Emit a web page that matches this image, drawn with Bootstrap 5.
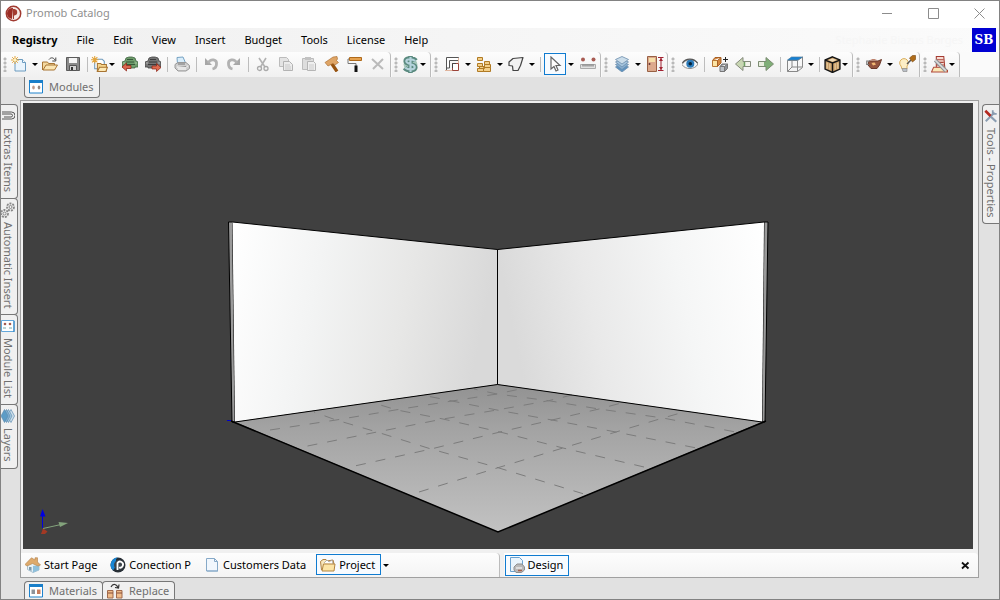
<!DOCTYPE html>
<html lang="en">
<head>
<meta charset="utf-8">
<meta name="viewport" content="width=device-width, initial-scale=1">
<title>Promob Catalog</title>
<link href="https://cdn.jsdelivr.net/npm/bootstrap@5.3.0/dist/css/bootstrap.min.css" rel="stylesheet">
<style>
:root{--edge:#828282;--tabline:#777;--ink:#6f6f6f;--blue:#0f7bd0}
body{font-family:"Noto Sans","Open Sans",sans-serif;font-size:11px;line-height:16px;color:#000;background:#e1e1e1;border:1px solid var(--edge);overflow:hidden}
button{font:inherit;color:inherit;background:none;border:0;padding:0}
svg{display:block;flex:none}
.titlebar{height:27px;background:#fff;color:#8f8f8f;padding:0 0 3px 4px}
.winbtns{margin-right:-3px}
.winbtn{width:46px;height:24px;color:#8c8c8c}
.menubar{height:24px;background:linear-gradient(90deg,#f0f0f0,#fbfbfb);padding:0 3px 0 1px}
.menubar a{color:#000;text-decoration:none;padding:4px 9px 4px 10px}
.user-name{color:#f6f6f6;padding-right:9px}
.user-badge{width:24px;height:24px;background:#0000d2;color:#fff;font:bold 12px/24px "DejaVu Serif",serif}
.toolbars{height:25px;background:#fafafa}
.strip{background:linear-gradient(#fdfdfd,#f0f0f0);border-right:1px solid #bcbcbc;border-radius:4px 4px 0 0;padding:0 1px 1px 0;margin-right:1px}
.strip:first-child .rule{width:6px}
.grip{width:9px;height:15px;background:radial-gradient(circle at 4px 2px,#b9b9b9 1px,transparent 2px) 0 0/9px 4px}
.tool{width:23px;height:22px;display:flex;align-items:center;justify-content:center;flex:none}
.tool-split{width:22px}
.arrow-split{width:10px;height:22px;flex:none;display:flex;align-items:center;justify-content:center}
.tool-drop{width:28px;padding-left:1px;justify-content:flex-start;gap:1px}
.tri{width:0;height:0;border:3px solid transparent;border-top-color:#000;border-bottom:0;flex:none}
.rule{width:7px;height:15px;flex:none;background:linear-gradient(#bdbdbd,#bdbdbd) center/1px 100% no-repeat}
.picked{border:1px solid var(--blue);background:#f7fbff}
.siderail{width:19px;padding-top:27px}
.siderail-right{width:20px;align-items:flex-end}
.side-tab{writing-mode:vertical-rl;display:flex;align-items:flex-end;gap:4px;width:17px;background:#f0f0f0;color:var(--ink);border:1px solid var(--tabline);border-left:0;border-radius:0 4px 4px 0;padding:3px 0 6px;margin-bottom:-1px;white-space:nowrap;line-height:14px}
.side-tab-right{align-items:center;border-left:1px solid var(--tabline);border-right:0;border-radius:4px 0 0 4px}
.flat-tab{display:flex;align-items:center;gap:6px;background:#f0f0f0;color:var(--ink);border:1px solid var(--tabline);padding:0 5px 0 4px}
.tab-top{border-top:0;border-radius:0 0 4px 4px;height:21px}
.tab-bottom{border-bottom:0;border-radius:4px 4px 0 0;height:18px;margin-right:-1px}
.toprow{height:23px;padding-left:4px}
.bottomrow{height:21px;padding:3px 0 0 4px}
.frame{border:1px solid #a0a0a0;background:#f0f0f0;padding:2px 5px 0 2px}
.scene{background:#404040;min-height:0}
.scene svg.room{width:100%;height:100%;position:absolute;inset:0}
.axes{position:absolute;left:16px;bottom:10px}
.docbar{height:28px;padding-top:4px;margin:0 -5px 0 -2px}
.docstrip{background:linear-gradient(#fdfdfd,#f4f4f4);border-radius:0 4px 0 0;padding-left:1px}
.doc-left{flex:0 0 50%;border-right:1px solid #bcbcbc;gap:7px}
.docbtn{display:flex;align-items:center;gap:3px;height:21px;padding:0 3px;white-space:nowrap}
.docbtn.picked{padding:0 5px 0 3px}
</style>
</head>
<body class="d-flex flex-column vh-100">
<svg width="0" height="0" class="position-absolute" aria-hidden="true">
<defs>
<linearGradient id="gL" x1="0" x2="1" y1="0" y2=".15"><stop offset="0" stop-color="#fff"/><stop offset=".35" stop-color="#f3f4f4"/><stop offset=".7" stop-color="#e7e7e6"/><stop offset="1" stop-color="#d9d9d9"/></linearGradient>
<linearGradient id="gR" x1="1" x2="0" y1="0" y2=".15"><stop offset="0" stop-color="#fff"/><stop offset=".35" stop-color="#f5f6f6"/><stop offset=".7" stop-color="#e9e9e9"/><stop offset="1" stop-color="#dadada"/></linearGradient>
<linearGradient id="gF" x1="0" x2="0" y1="0" y2="1"><stop offset="0" stop-color="#929292"/><stop offset=".3" stop-color="#a3a3a3"/><stop offset="1" stop-color="#c2c2c2"/></linearGradient>
<symbol id="new" viewBox="0 0 16 16"><path d="M4 3.500h7.500l3 3V15H4z" fill="#eaf4fc" stroke="#6c9cc0"/><path d="M11.500 3.500v3h3" fill="#fff" stroke="#6c9cc0"/><path d="M4 0v8M0 4h8M1.200 1.200l5.600 5.600M6.800 1.200L1.200 6.800" stroke="#e3a43a"/><circle cx="4" cy="4" r="1.500" fill="#fff3c0"/></symbol>
<symbol id="open" viewBox="0 0 16 16"><path d="M.5 14V6h5l1 1.500h6V10" fill="#f4d9a0" stroke="#a87432"/><path d="M1 14l3-5h11.500l-3 5z" fill="#fbe6b4" stroke="#a87432"/><path d="M7 3.500C9 1 11.500 1.500 13 4M13.800 1.500V5h-3.500" fill="none" stroke="#444"/></symbol>
<symbol id="save" viewBox="0 0 16 16"><path d="M1.500 1.500h13v13h-13z" fill="#8b8b8b" stroke="#5b5b5b"/><path d="M4 2h8v5H4z" fill="#f5f5f5"/><path d="M4.500 9.500h7v5h-7z" fill="#d5d5d5" stroke="#555"/><path d="M6 11h2v3H6z" fill="#333"/></symbol>
<symbol id="newf" viewBox="0 0 16 16"><path d="M3.500 3h7l2 2v7h-9z" fill="#fff" stroke="#6d99bb"/><path d="M6 14V7h3l1 1h4.500v6z" fill="#f6d68e" stroke="#a87432"/><path d="M6 14.500l2-4h7.500l-1.500 4z" fill="#fde9b5" stroke="#a87432"/><path d="M3.500 0v7M0 3.500h7M1 1l5 5M6 1L1 6" stroke="#e3a43a"/></symbol>
<symbol id="imp" viewBox="0 0 16 16"><path d="M3 5l1-3 3-1h3l3 1 1 3 2 1v5h-3v1H3v-1H0V6z" fill="#6f9d6c" stroke="#3f6340" stroke-width=".8"/><path d="M5 3.500h6M4 6h8M3 8.500h10" stroke="#36593a"/><path d="M1 7h2M13 7h2" stroke="#a9c9a2"/><path d="M0 11l4.500-4v2.500H9v3H4.500V15z" fill="#d9664f" stroke="#8b2013" stroke-width=".7"/></symbol>
<symbol id="exp" viewBox="0 0 16 16"><path d="M3 5l1-3 3-1h3l3 1 1 3 2 1v5h-3v1H3v-1H0V6z" fill="#757575" stroke="#444" stroke-width=".8"/><path d="M5 3.500h6M4 6h8M3 8.500h10" stroke="#3b3b3b"/><path d="M1 7h2M13 7h2" stroke="#b5b5b5"/><path d="M16 11.500L11.500 7.500V10H7v3h4.500v2.500z" fill="#df6b50" stroke="#8b2013" stroke-width=".7"/></symbol>
<symbol id="print" viewBox="0 0 16 16"><path d="M3.500 8L3 1.500l6-.5L12 8z" fill="#d9edfa" stroke="#76a3c4"/><path d="M1 8.500l3-2h8l3.500 3v3L12 15H4l-3-3z" fill="#cfcfcf" stroke="#999"/><path d="M3 11h9l2-1M4 13h8" stroke="#fff"/><path d="M4 8h7" stroke="#777"/></symbol>
<symbol id="undo" viewBox="0 0 16 16"><path d="M2 2v7h7z" fill="#a7a7a7"/><path d="M5 7C8 2 14 3.500 13.500 8c0 3-2 4.500-4 5" fill="none" stroke="#b2b2b2" stroke-width="2.800"/></symbol>
<symbol id="cut" viewBox="0 0 16 16"><path d="M4 2l6 9M11 2L5.500 11" stroke="#b2b2b2" stroke-width="1.600"/><circle cx="4.500" cy="12.500" r="2" fill="none" stroke="#aaa" stroke-width="1.300"/><circle cx="11" cy="12.500" r="2" fill="none" stroke="#aaa" stroke-width="1.300"/></symbol>
<symbol id="copy" viewBox="0 0 16 16"><path d="M1.500 1.500h7l2 2v7h-9z" fill="#e4e4e4" stroke="#bcbcbc"/><path d="M5.500 5.500h6l3 3v6h-9z" fill="#ececec" stroke="#b3b3b3"/><path d="M7 9h5M7 11h6M7 13h6" stroke="#c9c9c9"/></symbol>
<symbol id="paste" viewBox="0 0 16 16"><path d="M1.500 2.500h11v11h-11z" fill="#ddd" stroke="#bcbcbc"/><path d="M4 1h6v3H4z" fill="#c2c2c2"/><path d="M6.500 5.500h6l2 2v7h-8z" fill="#efefef" stroke="#b5b5b5"/><path d="M8 9h5M8 11h5M8 13h5" stroke="#ccc"/></symbol>
<symbol id="hammer" viewBox="0 0 16 16"><path d="M7 6.500l6 9" stroke="#96520f" stroke-width="3.200"/><path d="M1 6.500L9 1l4-.5.500 2.500-1 1.500 2 2L11 9 9 7.500 4 10z" fill="#dfa566" stroke="#a5662a" stroke-width=".6"/></symbol>
<symbol id="roller" viewBox="0 0 16 16"><path d="M2.500 1.500h12v3h-12z" fill="#e5a14e" stroke="#af6a1b"/><path d="M2 3H1v4.500h8V10" fill="none" stroke="#777"/><path d="M7.500 9.500h3V16h-3z" fill="#111"/></symbol>
<symbol id="del" viewBox="0 0 16 16"><path d="M2 3l11 10M13 3L3 13" stroke="#bababa" stroke-width="2"/></symbol>
<symbol id="dollar" viewBox="0 0 16 16"><ellipse cx="8" cy="8" rx="6.500" ry="6" fill="#a8c9bd"/><path d="M13 4.500C11 2 3.500 1.500 3.500 5c0 3.500 9 2 9 5.500 0 3.500-7.500 3.500-10 .5M8 0v16" fill="none" stroke="#5a8a7f" stroke-width="4.400"/><path d="M12.500 4.700C10 2.500 4 2.300 4 5c0 3 8 2 8 5.300 0 3-6 3-9 .7M8 1v14" fill="none" stroke="#b5d3dc" stroke-width="2"/></symbol>
<symbol id="plan" viewBox="0 0 16 16"><path d="M2.500 15V1.500h12V4.500H5.500V12h-3" fill="#fff" stroke="#555"/><path d="M1 14.500h8M14.500 2v5" stroke="#e0b49d"/><path d="M8.500 7.500h6v7h-6z" fill="#fff" stroke="#9b4339"/><path d="M8.500 12V7.500H12" fill="none" stroke="#444"/></symbol>
<symbol id="brick" viewBox="0 0 16 16"><path d="M1.500 1.500h5v3h-5zM8.500 5.500h5v3h-5zM1.500 7.500h5v3h-5zM3.500 10.500h5v2h-5zM8.500 8.500h6v3h-6zM1.500 12.500h6v3h-6zM7.500 11.500h7v4h-7z" fill="#f3cf88" stroke="#b07a24"/></symbol>
<symbol id="poly" viewBox="0 0 16 16"><path d="M5 2.500l10-1L12.500 9.500l-2.500 5H5L4.500 10 1 9.500V6z" fill="#f2f2f2" stroke="#444" stroke-width="1.200" stroke-linejoin="round"/></symbol>
<symbol id="cursor" viewBox="0 0 16 16"><path d="M4 1v12l3-2.500 2 4.500 2-1-2-4.500h4z" fill="#fff" stroke="#666" stroke-width="1.200"/></symbol>
<symbol id="ruler" viewBox="0 0 16 16"><path d="M.5 8.500h15v4H.5z" fill="#e1e1e1" stroke="#aaa"/><path d="M3 8.500v2M5 8.500v2M7 8.500v2M9 8.500v2M11 8.500v2M13 8.500v2" stroke="#666"/><circle cx="3" cy="3.500" r="2" fill="#a85b52"/><circle cx="13.500" cy="3.500" r="2" fill="#a85b52"/></symbol>
<symbol id="layers" viewBox="0 0 16 16"><g stroke="#6c8ead" stroke-width=".8"><path d="M8 7.500l6.500 3.500L8 16l-6.500-5z" fill="#5d92c0"/><path d="M8 5.500l6.500 3L8 13.500 1.500 8.500z" fill="#86aed0"/><path d="M8 3l6.500 3L8 11 1.500 6z" fill="#a5c4dd"/><path d="M8 .5l6.500 3L8 8 1.500 3.500z" fill="#cbddea"/></g></symbol>
<symbol id="door" viewBox="0 0 18 16"><path d="M1.500.5h9v15h-9z" fill="#dca98c" stroke="#986044"/><path d="M3 2h6v4H3z" fill="#f6dfa8"/><circle cx="3.500" cy="8" r="1" fill="#633"/><path d="M15 2v12M12 1.500h5.500M12 14.500h5.500" stroke="#a12332"/><path d="M13 5L15 2l2 3zM13 11l2 3 2-3z" fill="#a12332"/></symbol>
<symbol id="eye" viewBox="0 0 16 16"><path d="M0 8.500C3 2.500 13 2.500 16 8c-3 6-13 6-16 .5z" fill="#f5f7f9" stroke="#909090"/><circle cx="8.300" cy="7.800" r="4" fill="#2a7ab9"/><circle cx="8.300" cy="7.800" r="1.800" fill="#06233b"/><path d="M.5 7C4 1.500 12 2 15.500 7" fill="none" stroke="#555" stroke-width="1.300"/></symbol>
<symbol id="boxes" viewBox="0 0 16 16"><path d="M.5 4.500h5v6h-5z" fill="#fce4a4" stroke="#b77835"/><path d="M.5 4.500L3 1.500h6L5.500 4.500v6L9 7V1.500" fill="#d4873f" stroke="#a76025"/><path d="M8 10.500h4.500v5H8z" fill="#bdc2c8" stroke="#777"/><path d="M8 10.500L10 8h5.500l-3 2.500v5l3-3V8" fill="#8d9298" stroke="#777"/><path d="M13.500 1v5M11 3.500h5" stroke="#222"/></symbol>
<symbol id="arr" viewBox="0 0 16 16"><path d="M.5 5.500H8V1.500L15.500 8 8 14.500v-4H.5z" fill="#7fae77" stroke="#7c8c72"/><path d="M1 6h5v4H1z" fill="#e9eedf"/></symbol>
<symbol id="arl" viewBox="0 0 16 16"><path d="M15.500 5.500H8V1.500L.5 8 8 14.500v-4h7.500z" fill="#c8d6b2" stroke="#858b7c"/><path d="M10 6h5v4h-5z" fill="#f4f4ec"/><path d="M9.500 6v4" stroke="#6e9e61" stroke-width="1.500"/></symbol>
<symbol id="wire" viewBox="0 0 18 16"><path d="M1.500 4.500h10v11h-10zM11.500 4.500L16.500 1v10.500l-5 4M1.500 15.500l4.500-4.500h10M6 11V4.500" fill="none" stroke="#888"/><path d="M1.500 4L5.500 1h11L12 4z" fill="#1481d6" stroke="#4e7c9f" stroke-width=".7"/></symbol>
<symbol id="crate" viewBox="0 0 16 16"><path d="M8 .8l7 3v8.500L8 15.500 1 12.300V3.800z" fill="#c69c67" stroke="#151515" stroke-width="1.300"/><path d="M1 3.800l7 2.800 7-2.800M8 6.600v9" fill="none" stroke="#151515" stroke-width="1.300"/><path d="M3 6v6M5.500 7v6M10.500 7v6M13 6v6" stroke="#ecd0a3"/><path d="M4 3.800l4-1.500 4 1.500-4 1.500z" fill="#f0dab6"/></symbol>
<symbol id="teapot" viewBox="0 0 16 16"><path d="M3 5h9l3.500-1.500L13.500 9 11 12.500H5L2 9z" fill="#94553f" stroke="#693829"/><path d="M3 8.500H.8V5H4" fill="none" stroke="#777" stroke-width="1.200"/><path d="M4 4.500C5 2.500 10 2.500 11 4.500z" fill="#bd826c"/><path d="M5.500 7l3-.5 1.500 2-3 1z" fill="#f3ba74"/></symbol>
<symbol id="bulb" viewBox="0 0 18 18"><path d="M3 11a4.300 4.300 0 1 1 6 0v3H4z" fill="#fdeec5" stroke="#d9ae5d"/><path d="M4 13.500h5v3H5z" fill="#b9bfc7" stroke="#858585" stroke-width=".6"/><path d="M9 9l4-4" stroke="#555" stroke-width="1.500"/><path d="M11.500 3l3-2.500h3v4l-3 2.500z" fill="#b06d1a" stroke="#77470f" stroke-width=".6"/></symbol>
<symbol id="tower" viewBox="0 0 16 16"><path d="M5 .5h7l1 10.500H5z" fill="#f7dcd3" stroke="#a53b32"/><path d="M5 3.500h7M5 6h7M5 8.500h8" stroke="#aa453b"/><path d="M.5 15l2-4.500h7l6 3V15z" fill="#fae8b7" stroke="#b0493b"/><path d="M4 4l10 10" stroke="#8d9296" stroke-width="3.500"/><path d="M4 4l10 10" stroke="#ddd" stroke-width="1.500"/></symbol>
<symbol id="mods" viewBox="0 0 14 14"><path d="M.5 1h13v12H.5z" fill="#fff" stroke="#1e83cd"/><path d="M0 0h14v3H0z" fill="#1a7fc9"/><ellipse cx="4.500" cy="7.500" rx="1.300" ry="2" fill="#bd9a8b"/><ellipse cx="10" cy="7.500" rx="1.300" ry="2" fill="#998980"/></symbol>
<symbol id="mats" viewBox="0 0 14 14"><path d="M.5 1h13v12H.5z" fill="#fff" stroke="#1e83cd"/><path d="M0 0h14v3H0z" fill="#1a7fc9"/><path d="M2.500 5.500H6V10H2.500z" fill="#8f949b"/><path d="M8 5.500h3.500V10H8z" fill="#c87d5d"/></symbol>
<symbol id="swap" viewBox="0 0 16 16"><path d="M.5 7.500h5.500v7.500H.5zM9.500 7.500H15v7.500H9.500z" fill="#f0bc8a" stroke="#a16a4c"/><path d="M1 10h5M10 10h5" stroke="#874f3b"/><path d="M4 4C6 0 10 1 11 5M8 4.500l3.500.5.500-3.500" fill="none" stroke="#333" stroke-width="1.200"/></symbol>
<symbol id="home" viewBox="0 0 16 16"><path d="M2.500 7L7 3l7 4v6l-6 2.500-5.500-3z" fill="#e5f1f8" stroke="#88a9bd" stroke-width=".7"/><path d="M8 9v6.500l6-2.500V8z" fill="#8fc0dc"/><path d="M0 7.500L6.500.8 10 3V.8h2.500V5L15.500 8 13 9 7.500 6.500 2 9z" fill="#deaa6c" stroke="#b98a55" stroke-width=".7"/><path d="M4 10h2.500v4L4 12.700z" fill="#7d98a8"/></symbol>
<symbol id="conn" viewBox="0 0 16 16"><circle cx="8" cy="8" r="7.500" fill="#282f36"/><path d="M8 .5a7.500 7.500 0 0 0-5 13L6 9V2z" fill="#1785d4"/><circle cx="9" cy="8" r="5" fill="#3d454c"/><path d="M7.500 13V6a3 3 0 1 1 1.500 4.500" fill="none" stroke="#fff" stroke-width="1.800"/></symbol>
<symbol id="page" viewBox="0 0 14 16"><path d="M1.500 1.500h8l3 3v9.500h-11z" fill="#f1f7fd" stroke="#86a9c8"/><path d="M9.500 1.500v3h3M2 14h11" fill="none" stroke="#86a9c8"/></symbol>
<symbol id="proj" viewBox="0 0 16 16"><path d="M1.500 13L.5 4.500 3 2.500h3l1 1.500 6-1 1 4" fill="#f8e8be" stroke="#ae8040"/><path d="M4 6l3-3 2 2 3-2 1 4" fill="#fff" stroke="#999" stroke-width=".7"/><path d="M2 14L3.500 7h11.500l-1 7z" fill="#fce5a6" stroke="#b18441"/></symbol>
<symbol id="design" viewBox="0 0 16 16"><path d="M1.500.5h9l3 3v11h-12z" fill="#e9f4fc" stroke="#6ba1cd"/><path d="M5 10l3-3h5l2.500 3v3l-3 2.500H7L5 13z" fill="#b9b9b9" stroke="#8f8f8f"/><path d="M7 11h6" stroke="#fff"/><path d="M9 13.500h4" stroke="#a8604a" stroke-width="1.500"/></symbol>
<symbol id="clip" viewBox="0 0 14 14"><path d="M3 3h7.500a3.500 3.500 0 0 1 0 7H1M1 5h9a1.500 1.500 0 0 1 0 3H3M1 3h2" fill="none" stroke="#555"/></symbol>
<symbol id="gears" viewBox="0 0 14 16"><g fill="none" stroke="#888"><circle cx="9.500" cy="5" r="3.500" stroke-dasharray="2 1" stroke-width="1.800"/><circle cx="9.500" cy="5" r="1.500"/><circle cx="3.500" cy="11.500" r="3.500" stroke-dasharray="2 1" stroke-width="1.800"/><circle cx="3.500" cy="11.500" r="1.500"/></g></symbol>
<symbol id="mlist" viewBox="0 0 14 14"><path d="M.5 1.500h12.500v11H.5z" fill="#fff" stroke="#64a7da"/><path d="M13 2v11" stroke="#1c78bf"/><circle cx="4" cy="5" r="1.300" fill="#a35c51"/><circle cx="9" cy="5" r="1.300" fill="#a35c51"/><path d="M2 9h3M8 9h3" stroke="#7aa"/></symbol>
<symbol id="vlayers" viewBox="0 0 14 14"><g stroke="#5f8cb0" stroke-width=".7"><path d="M10 .5L13.500 7 10 13.500 6 7z" fill="#cfe1ec"/><path d="M7.500.5L11 7l-3.500 6.500L3.500 7z" fill="#a7cbe1"/><path d="M5.500.5L9 7l-3.500 6.500L1.500 7z" fill="#80b1d3"/><path d="M3.500.5L7 7l-3.500 6.500L0 7z" fill="#5c9cc6"/></g></symbol>
<symbol id="wrench" viewBox="0 0 16 16"><path d="M2 14L12 4" stroke="#8a9db1" stroke-width="2.200"/><path d="M10 1.500v4h4.500" fill="none" stroke="#8a9db1" stroke-width="2"/><path d="M7 8l7 6.500" stroke="#8a9db1" stroke-width="2.500"/><path d="M1.500 2l6 6" stroke="#b3281f" stroke-width="3"/></symbol>
</defs>
</svg>

<header class="titlebar d-flex align-items-center">
  <svg width="17" height="17" viewBox="0 0 17 17" aria-hidden="true"><circle cx="8.500" cy="8.500" r="7.200" fill="#f7e9e6" stroke="#a13a30" stroke-width="1.500"/><path d="M8 3a5.500 5.500 0 0 0-1 11z" fill="#9b2c24"/><path d="M8 14V4h1.500a3.300 3.300 0 0 1 0 6.500H9V14z" fill="#a33b30"/></svg>
  <span class="ms-1">Promob Catalog</span>
  <div class="winbtns ms-auto d-flex">
    <button class="winbtn" aria-label="Minimize"><svg class="mx-auto" width="11" height="11"><path d="M0 5.500h10" stroke="currentColor"/></svg></button>
    <button class="winbtn" aria-label="Maximize"><svg class="mx-auto" width="11" height="11"><path d="M.5.5h10v10H.5z" fill="none" stroke="currentColor"/></svg></button>
    <button class="winbtn" aria-label="Close"><svg class="mx-auto" width="11" height="11"><path d="M.5.500l10 10M10.500.500l-10 10" stroke="currentColor"/></svg></button>
  </div>
</header>

<nav class="menubar d-flex align-items-center" aria-label="Main menu">
  <a href="#" class="fw-bold">Registry</a><a href="#">File</a><a href="#">Edit</a><a href="#">View</a><a href="#">Insert</a><a href="#">Budget</a><a href="#">Tools</a><a href="#">License</a><a href="#">Help</a>
  <span class="user-name ms-auto">Stephanie Biazus Borges</span>
  <span class="user-badge text-center">SB</span>
</nav>

<div class="toolbars d-flex" role="toolbar" aria-label="Tools">
  <div class="strip d-flex align-items-center">
    <span class="grip"></span>
    <button class="tool tool-drop" aria-label="New"><svg width="16" height="16"><use href="#new"/></svg><span class="tri ms-1"></span></button>
    <button class="tool" aria-label="Open"><svg width="16" height="16"><use href="#open"/></svg></button>
    <button class="tool" aria-label="Save"><svg width="16" height="16"><use href="#save"/></svg></button>
    <span class="rule"></span>
    <button class="tool tool-drop" aria-label="New from folder"><svg width="17" height="17"><use href="#newf"/></svg><span class="tri"></span></button>
    <button class="tool" aria-label="Import"><svg width="16" height="16"><use href="#imp"/></svg></button>
    <button class="tool" aria-label="Export"><svg width="16" height="16"><use href="#exp"/></svg></button>
    <span class="rule"></span>
    <button class="tool" aria-label="Print"><svg width="16" height="16"><use href="#print"/></svg></button>
    <span class="rule"></span>
    <button class="tool" aria-label="Undo"><svg width="16" height="16"><use href="#undo"/></svg></button>
    <button class="tool" aria-label="Redo"><svg width="16" height="16" viewBox="0 0 16 16"><g transform="matrix(-1 0 0 1 16 0)"><use href="#undo"/></g></svg></button>
    <span class="rule"></span>
    <button class="tool" aria-label="Cut"><svg width="16" height="16"><use href="#cut"/></svg></button>
    <button class="tool" aria-label="Copy"><svg width="16" height="16"><use href="#copy"/></svg></button>
    <button class="tool" aria-label="Paste"><svg width="16" height="16"><use href="#paste"/></svg></button>
    <button class="tool" aria-label="Build"><svg width="16" height="16"><use href="#hammer"/></svg></button>
    <button class="tool" aria-label="Paint"><svg width="16" height="16"><use href="#roller"/></svg></button>
    <button class="tool" aria-label="Delete"><svg width="16" height="16"><use href="#del"/></svg></button>
  </div>
  <div class="strip d-flex align-items-center">
    <span class="grip"></span>
    <button class="tool tool-drop" aria-label="Budget"><svg width="17" height="17"><use href="#dollar"/></svg><span class="tri"></span></button>
  </div>
  <div class="strip d-flex align-items-center">
    <span class="grip"></span>
    <button class="tool tool-split" aria-label="Room"><svg width="16" height="16"><use href="#plan"/></svg></button><button class="arrow-split" aria-label="Room options"><span class="tri"></span></button>
    <button class="tool tool-split" aria-label="Wall"><svg width="16" height="16"><use href="#brick"/></svg></button><button class="arrow-split" aria-label="Wall options"><span class="tri"></span></button>
    <button class="tool tool-split" aria-label="Shape"><svg width="16" height="16"><use href="#poly"/></svg></button><button class="arrow-split" aria-label="Shape options"><span class="tri"></span></button>
    <span class="rule"></span>
    <button class="tool tool-split picked" aria-label="Select"><svg width="16" height="16"><use href="#cursor"/></svg></button><button class="arrow-split" aria-label="Select options"><span class="tri"></span></button>
    <button class="tool" aria-label="Measure"><svg width="16" height="16"><use href="#ruler"/></svg></button>
  </div>
  <div class="strip d-flex align-items-center">
    <span class="grip"></span>
    <button class="tool tool-split" aria-label="Layers"><svg width="16" height="16"><use href="#layers"/></svg></button><button class="arrow-split" aria-label="Layers options"><span class="tri"></span></button>
    <button class="tool" aria-label="Height"><svg width="18" height="16"><use href="#door"/></svg></button>
  </div>
  <div class="strip d-flex align-items-center">
    <span class="grip"></span>
    <button class="tool" aria-label="View"><svg width="16" height="16"><use href="#eye"/></svg></button>
    <span class="rule"></span>
    <button class="tool" aria-label="Add view"><svg width="16" height="16"><use href="#boxes"/></svg></button>
    <button class="tool" aria-label="Previous"><svg width="16" height="16"><use href="#arl"/></svg></button>
    <button class="tool" aria-label="Next"><svg width="16" height="16"><use href="#arr"/></svg></button>
    <span class="rule"></span>
    <button class="tool tool-split" aria-label="Projection"><svg width="18" height="16"><use href="#wire"/></svg></button><button class="arrow-split" aria-label="Projection options"><span class="tri"></span></button>
    <span class="rule"></span>
    <button class="tool tool-drop" aria-label="Box"><svg width="17" height="17"><use href="#crate"/></svg><span class="tri"></span></button>
  </div>
  <div class="strip d-flex align-items-center">
    <span class="grip"></span>
    <button class="tool tool-split" aria-label="Render"><svg width="16" height="16"><use href="#teapot"/></svg></button><button class="arrow-split" aria-label="Render options"><span class="tri"></span></button>
    <button class="tool" aria-label="Lighting"><svg width="18" height="18"><use href="#bulb"/></svg></button>
  </div>
  <div class="strip d-flex align-items-center">
    <span class="grip"></span>
    <button class="tool tool-drop" aria-label="Configure"><svg width="17" height="17"><use href="#tower"/></svg><span class="tri"></span></button>
  </div>
</div>

<div class="d-flex flex-fill overflow-hidden">
  <aside class="siderail d-flex flex-column align-items-start">
    <button class="side-tab"><svg width="14" height="16"><use href="#clip"/></svg>Extras Items</button>
    <button class="side-tab"><svg width="14" height="16"><use href="#gears"/></svg>Automatic Insert</button>
    <button class="side-tab"><svg width="14" height="16"><use href="#mlist"/></svg>Module List</button>
    <button class="side-tab"><svg width="14" height="16"><use href="#vlayers"/></svg>Layers</button>
  </aside>
  <main class="d-flex flex-column flex-fill">
    <div class="toprow d-flex align-items-start"><button class="flat-tab tab-top"><svg width="14" height="14"><use href="#mods"/></svg>Modules</button></div>
    <section class="frame d-flex flex-column flex-fill">
      <div class="scene position-relative flex-fill">
        <svg class="room" viewBox="23 103 950 446" preserveAspectRatio="xMidYMid slice" role="img" aria-label="Empty room in perspective">
          <path d="M228.500 222h4l2.500 200h-3z" fill="#9a9a9a" stroke="#000"/>
          <path d="M768 222h-4l-2 200h3z" fill="#9a9a9a" stroke="#000"/>
          <path d="M232.500 222L497.500 249.500V384.500L235 422z" fill="url(#gL)"/>
          <path d="M764 222L497.500 249.500V384.500L762 422z" fill="url(#gR)"/>
          <path d="M235 422L497.500 384.500 762 422 498 532z" fill="url(#gF)"/>
          <g fill="none" stroke="#7c7c7c" stroke-dasharray="10 10">
            <path d="M419 492L498 467.700 563 448 616 432 663 418 684 412"/>
            <path d="M356 465.700L431 449 500 432 552 420 599 409 625 402"/>
            <path d="M307.500 446L377 432 443 419 497 410 548.600 400.700 572 395"/>
            <path d="M270 430L336 420 397 409.700 452 401 497 394 520 389"/>
            <path d="M583 493.700L498 467.700 431 449 377 432 336 420 314 412"/>
            <path d="M644 467L563 448 500 432 443 419 397 410 377 404"/>
            <path d="M695 447.700L616 432 552 420 497 410 452 401 427 396"/>
            <path d="M734 431.700L663 418 599 409 548.600 400.700 497 394 474 389"/>
          </g>
          <path d="M232.500 222L497.500 249.500 764 222M497.500 249.500V384.500M235 422L497.500 384.500 762 422" fill="none" stroke="#000"/>
          <path d="M231 421L498 532 766 421" fill="none" stroke="#000" stroke-width="1.500"/>
          <path d="M227 420.500h4" stroke="#00c"/>
        </svg>
        <svg class="axes" width="30" height="32" viewBox="0 0 30 32" aria-hidden="true"><path d="M3.500 21V6" stroke="#0000e0"/><path d="M3.500 2L1 9.500h5.500z" fill="#0000e0"/><path d="M4 21.500l18-4" stroke="#83a37c"/><path d="M29 16l-9.500-1 1.500 5z" fill="#83a37c"/><path d="M4 21.500l4.500 3L6 27H2z" fill="#a33924"/></svg>
      </div>
      <div class="docbar d-flex">
        <div class="docstrip doc-left d-flex align-items-center">
          <button class="docbtn"><svg width="16" height="16"><use href="#home"/></svg>Start Page</button>
          <button class="docbtn"><svg width="16" height="16"><use href="#conn"/></svg>Conection P</button>
          <button class="docbtn"><svg width="16" height="16"><use href="#page"/></svg>Customers Data</button>
          <div class="d-flex">
            <button class="docbtn picked"><svg width="16" height="16"><use href="#proj"/></svg>Project</button>
            <button class="arrow-split" aria-label="Project options"><span class="tri"></span></button>
          </div>
        </div>
        <div class="docstrip d-flex align-items-center flex-fill ms-1">
          <button class="docbtn picked"><svg width="16" height="16"><use href="#design"/></svg>Design</button>
          <button class="ms-auto me-2" aria-label="Close view"><svg width="9" height="9" viewBox="0 0 9 9"><path d="M1 1.500l6.500 6M7.500 1.500l-6.500 6" stroke="#111" stroke-width="1.800"/></svg></button>
        </div>
      </div>
    </section>
    <div class="bottomrow d-flex"><button class="flat-tab tab-bottom"><svg width="14" height="14"><use href="#mats"/></svg>Materials</button><button class="flat-tab tab-bottom"><svg width="16" height="16"><use href="#swap"/></svg>Replace</button></div>
  </main>
  <aside class="siderail siderail-right d-flex flex-column">
    <button class="side-tab side-tab-right"><svg width="14" height="16"><use href="#wrench"/></svg>Tools - Properties</button>
  </aside>
</div>
<script src="https://cdn.jsdelivr.net/npm/bootstrap@5.3.0/dist/js/bootstrap.bundle.min.js"></script>
</body>
</html>
